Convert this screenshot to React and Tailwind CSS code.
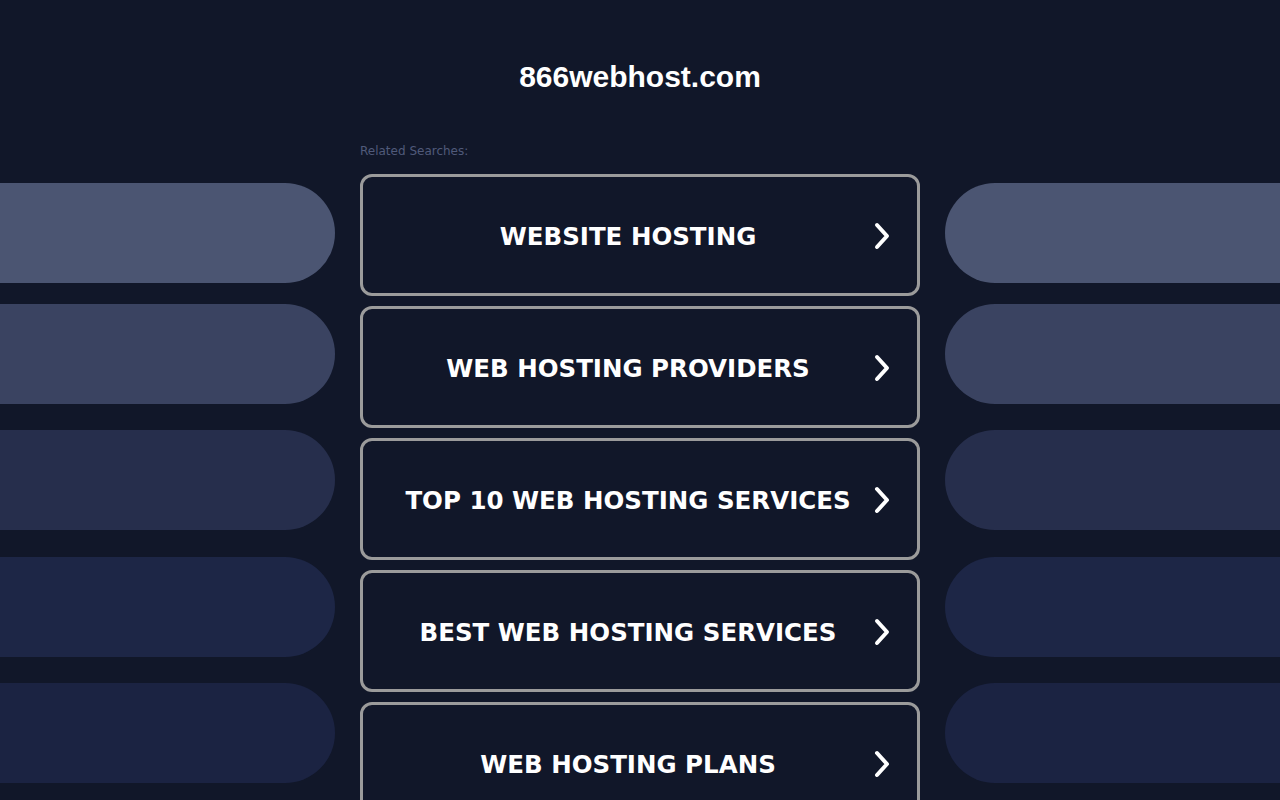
import React from "react";

const items = [
  "WEBSITE HOSTING",
  "WEB HOSTING PROVIDERS",
  "TOP 10 WEB HOSTING SERVICES",
  "BEST WEB HOSTING SERVICES",
  "WEB HOSTING PLANS",
];

function Chevron() {
  return (
    <svg width="16" height="28" viewBox="0 0 16 28" className="shrink-0 mt-[2px]">
      <polyline
        points="3,3 13,14 3,25"
        fill="none"
        stroke="white"
        strokeWidth="4"
        strokeLinecap="round"
        strokeLinejoin="round"
      />
    </svg>
  );
}

function LeftPills() {
  return (
    <div className="flex flex-col w-[335px] shrink-0 pt-[183px]">
      <div className="h-[100px] rounded-r-full bg-[#4b5572]" />
      <div className="h-[100px] mt-[21px] rounded-r-full bg-[#3a4361]" />
      <div className="h-[100px] mt-[26px] rounded-r-full bg-[#262e4c]" />
      <div className="h-[100px] mt-[27px] rounded-r-full bg-[#1d2646]" />
      <div className="h-[100px] mt-[26px] rounded-r-full bg-[#1b2342]" />
    </div>
  );
}

function RightPills() {
  return (
    <div className="flex flex-col w-[335px] shrink-0 pt-[183px]">
      <div className="h-[100px] rounded-l-full bg-[#4b5572]" />
      <div className="h-[100px] mt-[21px] rounded-l-full bg-[#3a4361]" />
      <div className="h-[100px] mt-[26px] rounded-l-full bg-[#262e4c]" />
      <div className="h-[100px] mt-[27px] rounded-l-full bg-[#1d2646]" />
      <div className="h-[100px] mt-[26px] rounded-l-full bg-[#1b2342]" />
    </div>
  );
}

export default function App() {
  return (
    <div className="w-[1280px] h-[800px] overflow-hidden bg-[#111729] flex gap-[25px]">
      <LeftPills />
      <div className="w-[560px] shrink-0 flex flex-col">
        <h1 className="mt-[59px] h-[36px] leading-[36px] text-center text-white font-bold text-[30px] font-['Liberation_Sans',Arial,sans-serif]">
          866webhost.com
        </h1>
        <div className="mt-[48px] h-[16px] leading-[16px] text-[12px] text-[#505a7a] font-['DejaVu_Sans',sans-serif]">
          Related Searches:
        </div>
        <div className="mt-[15px] flex flex-col gap-[10px]">
          {items.map((t) => (
            <div
              key={t}
              className="h-[122px] shrink-0 border-[3px] border-[#9b9b9b] rounded-[12px] flex items-center pl-[23px] pr-[27px] gap-[4px]"
            >
              <span className="flex-1 pt-[4px] text-center text-white font-bold text-[24.5px] font-['DejaVu_Sans',Verdana,sans-serif] whitespace-nowrap">
                {t}
              </span>
              <Chevron />
            </div>
          ))}
        </div>
      </div>
      <RightPills />
    </div>
  );
}
